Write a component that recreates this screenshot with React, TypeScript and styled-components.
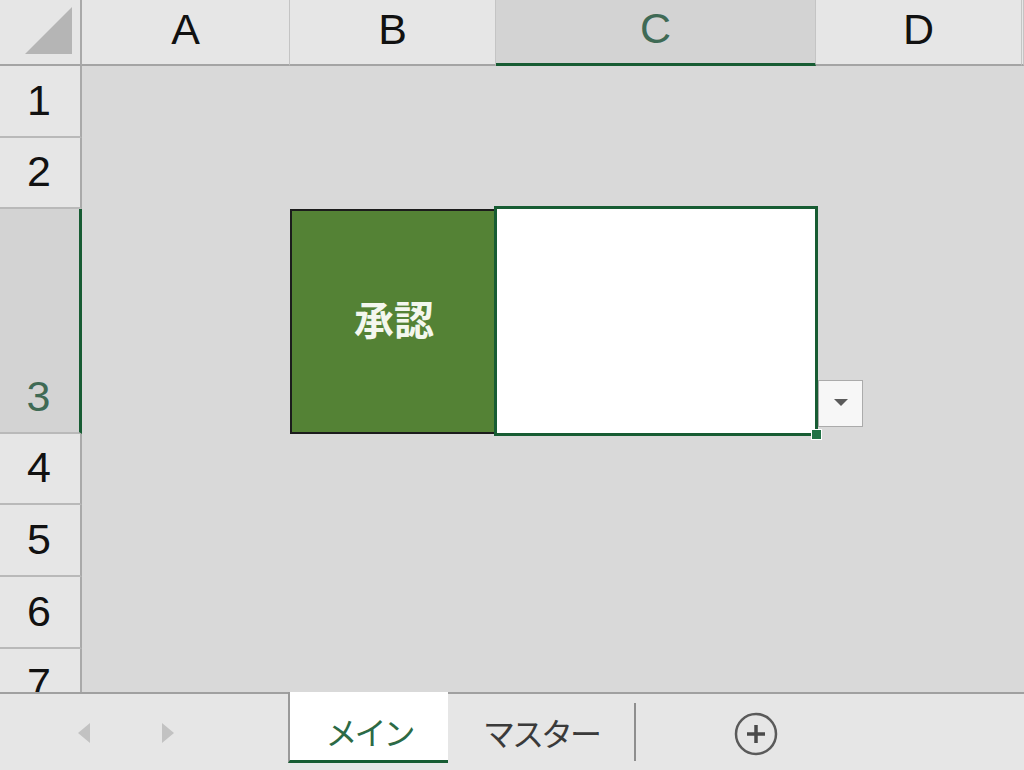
import styled, {createGlobalStyle} from 'styled-components';

const GlobalStyle = createGlobalStyle`
  html, body {
    margin: 0;
    padding: 0;
    background: #e6e6e6;
  }
`;

const columns = [
  {label: 'A', selected: false},
  {label: 'B', selected: false},
  {label: 'C', selected: true},
  {label: 'D', selected: false},
  {label: '', selected: false},
];

const rows = [
  {label: '1', selected: false},
  {label: '2', selected: false},
  {label: '3', selected: true},
  {label: '4', selected: false},
  {label: '5', selected: false},
  {label: '6', selected: false},
  {label: '7', selected: false},
];

const SELECT_GREEN = '#175c33';

export default function App() {
  return (
    <>
      <GlobalStyle />
      <Window>
        <Sheet>
          <Corner>
            <svg width="82" height="64" viewBox="0 0 82 64">
              <polygon points="25,54 72,54 72,7" fill="#b5b5b5" />
            </svg>
          </Corner>
          {columns.map((c, i) => (
            <ColHeader key={i} $selected={c.selected}>
              <HeaderText>{c.label}</HeaderText>
            </ColHeader>
          ))}
          {rows.map((r, i) => (
            <RowHeader key={i} $selected={r.selected} style={{gridRow: i + 2}}>
              <HeaderText>{r.label}</HeaderText>
            </RowHeader>
          ))}
          <LabelCell>承認</LabelCell>
          <InputCell>
            <Selection />
            <FillHandle />
            <DropButton>
              <svg width="16" height="9" viewBox="0 0 16 9">
                <polygon points="1,1 15,1 8,8" fill="#5b5b5b" />
              </svg>
            </DropButton>
          </InputCell>
        </Sheet>
        <TabBar>
          <NavArrows>
            <svg width="12" height="20" viewBox="0 0 12 20">
              <polygon points="12,0 12,20 0,10" fill="#c2c2c2" />
            </svg>
            <svg width="12" height="20" viewBox="0 0 12 20">
              <polygon points="0,0 0,20 12,10" fill="#c2c2c2" />
            </svg>
          </NavArrows>
          <Tab $active>メイン</Tab>
          <Tab>マスター</Tab>
          <TabDivider />
          <AddSheet>
            <svg width="46" height="46" viewBox="0 0 46 46">
              <circle cx="23" cy="23" r="20" fill="none" stroke="#5a5a5a" strokeWidth="2.5" />
              <line x1="14" y1="23" x2="32" y2="23" stroke="#4a4a4a" strokeWidth="3.5" />
              <line x1="23" y1="14" x2="23" y2="32" stroke="#4a4a4a" strokeWidth="3.5" />
            </svg>
          </AddSheet>
        </TabBar>
      </Window>
    </>
  );
}

const Window = styled.div`
  width: 1024px;
  height: 770px;
  display: flex;
  flex-direction: column;
  overflow: hidden;
  background: #e6e6e6;
`;

const Sheet = styled.div`
  height: 692px;
  display: grid;
  grid-template-columns: 82px 208px 206px 320px 206px 1fr;
  grid-template-rows: 66px 72px 71px 225px 71px 72px 72px 72px;
  background: #d9d9d9;
  overflow: hidden;
`;

const Corner = styled.div`
  grid-row: 1;
  grid-column: 1;
  background: #e6e6e6;
  border-right: 2px solid #a9a9a9;
  border-bottom: 2px solid #a4a4a4;
  box-sizing: border-box;
`;

const HeaderText = styled.span`
  font-family: "Liberation Sans", Arial, sans-serif;
  font-size: 43px;
  line-height: 1;
`;

const ColHeader = styled.div<{$selected: boolean}>`
  grid-row: 1;
  box-sizing: border-box;
  display: flex;
  justify-content: center;
  align-items: flex-end;
  padding-bottom: 13px;
  background: ${p => (p.$selected ? '#d3d3d3' : '#e6e6e6')};
  color: ${p => (p.$selected ? '#3f6a55' : '#111')};
  border-right: 1px solid #c4c4c4;
  border-bottom: ${p => (p.$selected ? `3px solid ${SELECT_GREEN}` : '2px solid #a4a4a4')};
`;

const RowHeader = styled.div<{$selected: boolean}>`
  grid-column: 1;
  box-sizing: border-box;
  display: flex;
  justify-content: center;
  align-items: flex-end;
  padding-bottom: 14px;
  padding-right: 2px;
  background: ${p => (p.$selected ? '#d3d3d3' : '#e6e6e6')};
  color: ${p => (p.$selected ? '#3f6a55' : '#111')};
  border-bottom: 2px solid #b9b9b9;
  border-right: ${p => (p.$selected ? `3px solid ${SELECT_GREEN}` : '2px solid #a9a9a9')};
`;

const LabelCell = styled.div`
  grid-row: 4;
  grid-column: 3;
  box-sizing: border-box;
  border: 2px solid #1c1c1c;
  border-right: none;
  background: #548235;
  color: #f3f7ee;
  display: flex;
  align-items: center;
  justify-content: center;
  font-family: "Noto Sans CJK JP", sans-serif;
  font-weight: 700;
  font-size: 40px;
  padding-bottom: 8px;
`;

const InputCell = styled.div`
  grid-row: 4;
  grid-column: 4;
  position: relative;
  background: #ffffff;
`;

const Selection = styled.div`
  position: absolute;
  left: -2px;
  right: -2px;
  top: -3px;
  bottom: -2px;
  border: 3px solid ${SELECT_GREEN};
`;

const FillHandle = styled.div`
  position: absolute;
  right: -6px;
  bottom: -6px;
  width: 9px;
  height: 9px;
  background: #217346;
  border: 1px solid #ffffff;
`;

const DropButton = styled.div`
  position: absolute;
  left: calc(100% + 2px);
  bottom: 7px;
  width: 45px;
  height: 47px;
  box-sizing: border-box;
  background: #f7f7f7;
  border: 1px solid #ababab;
  display: flex;
  align-items: center;
  justify-content: center;
  padding-bottom: 3px;
`;

const TabBar = styled.div`
  flex: 1;
  display: flex;
  align-items: stretch;
  border-top: 2px solid #a0a0a0;
  padding-bottom: 7px;
  background: #e6e6e6;
`;

const NavArrows = styled.div`
  width: 288px;
  display: flex;
  align-items: center;
  gap: 72px;
  padding-left: 78px;
  box-sizing: border-box;
  padding-top: 8px;
`;

const Tab = styled.div<{$active?: boolean}>`
  width: ${p => (p.$active ? '160px' : '186px')};
  box-sizing: border-box;
  display: flex;
  align-items: center;
  justify-content: center;
  padding-top: 9px;
  font-family: "Noto Sans CJK JP", sans-serif;
  font-size: 32px;
  letter-spacing: -3px;
  color: ${p => (p.$active ? '#2c6a45' : '#3a3a3a')};
  background: ${p => (p.$active ? '#ffffff' : 'transparent')};
  border-left: ${p => (p.$active ? '2px solid #9a9a9a' : 'none')};
  border-bottom: ${p => (p.$active ? `3px solid ${SELECT_GREEN}` : '3px solid transparent')};
  margin-top: ${p => (p.$active ? '-2px' : '0')};
`;

const TabDivider = styled.div`
  width: 2px;
  margin: 9px 0 2px;
  background: #8e8e8e;
`;

const AddSheet = styled.div`
  margin-left: 97px;
  display: flex;
  align-items: center;
  padding-top: 10px;
`;
